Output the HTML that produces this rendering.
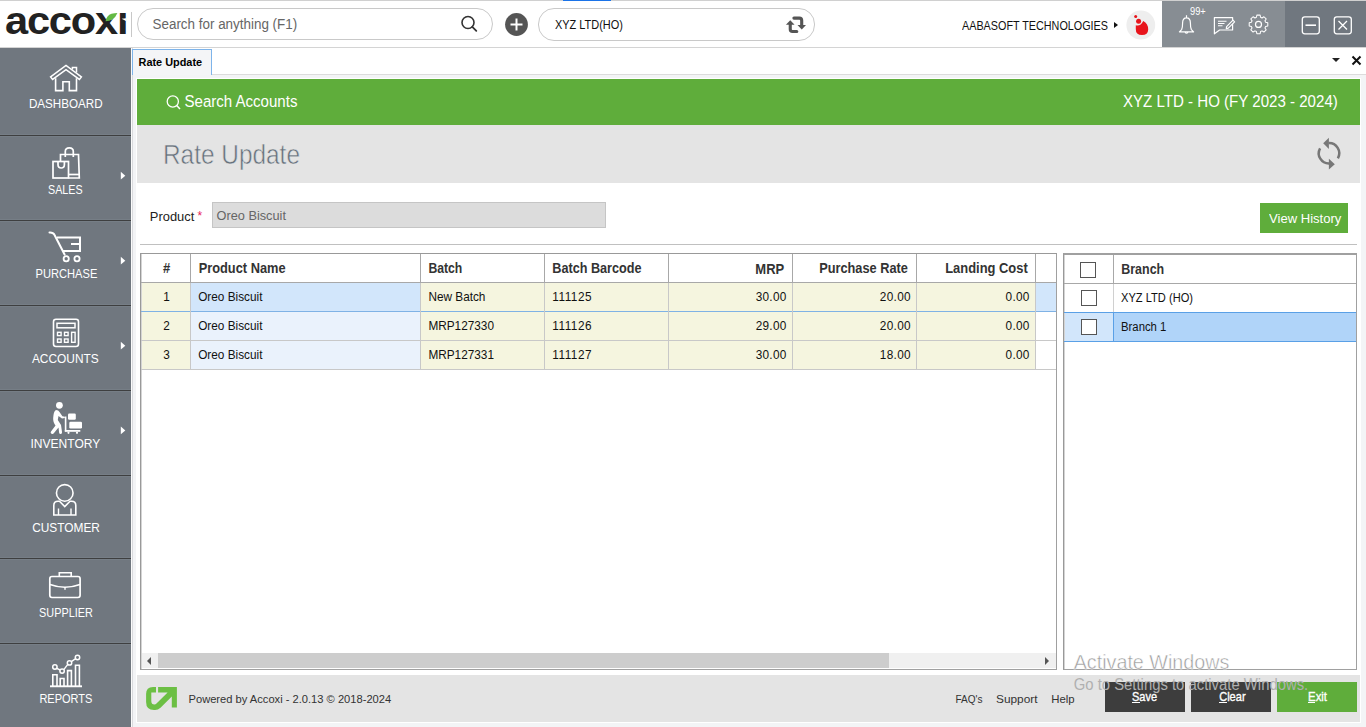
<!DOCTYPE html>
<html><head><meta charset="utf-8">
<style>
*{box-sizing:border-box;margin:0;padding:0}
html,body{width:1366px;height:727px;overflow:hidden;background:#fff;font-family:"Liberation Sans",sans-serif;position:relative}
.a{position:absolute}
.t{position:absolute;white-space:nowrap;line-height:1}
svg{position:absolute;overflow:visible}
.sep{position:absolute;left:0;width:131px;height:3px;background:#767e86;border-top:0;}.sep::after{content:'';position:absolute;left:0;top:1px;width:131px;height:1px;background:#3e3f40}
.arr{position:absolute;left:121px;width:0;height:0;border-left:4.5px solid #fff;border-top:3.5px solid transparent;border-bottom:3.5px solid transparent}
</style></head><body>

<div class="a" style="left:0;top:0;width:1366px;height:1px;background:#d0d0d0"></div>
<div class="a" style="left:0;top:47px;width:1366px;height:1px;background:#d4d4d4"></div>
<div class="a" style="left:563px;top:0;width:48px;height:1px;background:#1a73e8"></div>
<div class="t" style="left:5px;top:1px;font-size:42px;font-weight:bold;color:#222;letter-spacing:-1.2px;transform-origin:0 12px;transform:scale(0.99,0.91)">accox&#305;</div>
<svg style="left:0;top:0" width="130" height="46" viewBox="0 0 130 46"><path d="M104.5 11 H118.8 V14.5 L112 19.6 L106.5 19.8 Z" fill="#fff"/><path d="M105.6 21.2 Q106.6 15.5 111.5 13.8 Q114.5 12.9 117.4 12.9 Q115.8 17 112.5 19.2 Q109.5 21.2 105.6 21.2 Z" fill="#63b944"/><path d="M121.6 18.7 L126 18.2 L126 21 Z" fill="#fff"/></svg>
<div class="a" style="left:131px;top:12px;width:1px;height:25px;background:#c8c8c8"></div>
<div class="a" style="left:137px;top:8px;width:356px;height:32px;border:1px solid #c9c9c9;border-radius:16px"></div>
<svg style="left:460px;top:15px" width="18" height="18" viewBox="0 0 18 18"><circle cx="8" cy="7.5" r="6" fill="none" stroke="#333" stroke-width="1.6"/><line x1="12.3" y1="11.8" x2="16.3" y2="15.8" stroke="#333" stroke-width="1.8" stroke-linecap="round"/></svg>
<svg style="left:505px;top:13px" width="23" height="23" viewBox="0 0 23 23"><circle cx="11.5" cy="11.5" r="11.4" fill="#555"/><line x1="5.5" y1="11.5" x2="17.5" y2="11.5" stroke="#fff" stroke-width="2"/><line x1="11.5" y1="5.5" x2="11.5" y2="17.5" stroke="#fff" stroke-width="2"/></svg>
<div class="a" style="left:538px;top:8px;width:277px;height:33px;border:1px solid #c9c9c9;border-radius:16px"></div>
<svg style="left:782px;top:12px" width="28" height="24" viewBox="0 0 28 24"><g fill="none" stroke="#555" stroke-width="3.1" stroke-linecap="round"><path d="M8.25 12 V17.3 Q8.25 19.5 10.45 19.5 H14.8"/><path d="M11.9 6.1 H17.4 Q19.7 6.1 19.7 8.4 V13.5"/></g><g fill="#555"><path d="M8.25 8.2 L3.9 12.8 H12.6 Z"/><path d="M19.75 17.4 L15.5 13 H24 Z"/></g></svg>
<div class="a" style="left:1114px;top:22px;width:0;height:0;border-left:4px solid #111;border-top:3.5px solid transparent;border-bottom:3.5px solid transparent"></div>
<svg style="left:1126px;top:10px" width="30" height="30" viewBox="0 0 30 30"><circle cx="14.8" cy="15" r="14.4" fill="#eeeeee"/><path d="M9.8 15.2 Q14.5 16.5 17.2 10.9 Q22.3 13.5 22.2 19.5 Q22 25 16 25 Q9.6 25 9.8 19 Z" fill="#e8141b"/><circle cx="12.6" cy="11.2" r="2.5" fill="#e8141b"/><circle cx="9.7" cy="6.4" r="1.5" fill="#e8141b"/></svg>
<div class="a" style="left:1162px;top:1px;width:123px;height:46px;background:#878d93"></div>
<div class="a" style="left:1285px;top:1px;width:81px;height:46px;background:#70777f"></div>
<svg style="left:1162px;top:0" width="204" height="48" viewBox="0 0 204 48"><g fill="none" stroke="#fff" stroke-width="1.2" stroke-linejoin="round">
<path d="M24.5 15.2 V17.8 M19.6 29.6 C20.5 28 20.6 26 20.6 23 Q20.6 17.9 24.5 17.9 Q28.4 17.9 28.4 23 C28.4 26 28.5 28 29.4 29.6 L31.6 31.8 H17.4 Z"/>
<path d="M23 32.2 Q24.5 34.2 26 32.2"/>
<path d="M52.4 17.6 H70.6 V30 H57.6 L52.4 33.8 Z"/>
<path d="M56 21.2 H64.5 M56 23.5 H62.5 M56 25.8 H60.5" stroke-width="1.1"/>
<path d="M64.6 26.6 L71 20.2 L72.6 21.8 L66.3 28.2 L64.3 28.7 Z" fill="#878d93"/>
<circle cx="96.5" cy="24.4" r="3"/>
<path d="M94.6 15.2 H98.4 L98.9 17.7 L100.6 18.5 L102.8 17.1 L105.4 19.7 L104 21.9 L104.8 23.6 L107.3 24.1 V27.9 L104.8 28.4 L104 30.1 L105.4 32.3 L102.8 34.9 L100.6 33.5 L98.9 34.3 L98.4 36.8 H94.6 L94.1 34.3 L92.4 33.5 L90.2 34.9 L87.6 32.3 L89 30.1 L88.2 28.4 L85.7 27.9 V24.1 L88.2 23.6 L89 21.9 L87.6 19.7 L90.2 17.1 L92.4 18.5 L94.1 17.7 Z" transform="translate(96.5 24.4) scale(0.86) translate(-96.5 -26)"/>
<rect x="140.3" y="16.8" width="17" height="17" rx="2.5" stroke-width="1.3"/>
<path d="M143.5 25.2 H154" stroke-width="1.6"/>
<rect x="172.3" y="16.8" width="17" height="17" rx="2.5" stroke-width="1.3"/>
<path d="M176.5 21 L185 29.5 M185 21 L176.5 29.5" stroke-width="1.3"/>
</g></svg>

<div class="t" style="left:152.50px;top:17.63px;font-size:13.43px;color:#666;transform-origin:0 11.37px;transform:scaleY(1.079);">Search for anything (F1)</div>
<div class="t" style="left:555.00px;top:19.72px;font-size:10.96px;color:#111;transform-origin:0 9.28px;transform:scaleY(1.190);">XYZ LTD(HO)</div>
<div class="t" style="left:962.00px;top:20.86px;font-size:10.80px;color:#111;transform-origin:0 9.14px;transform:scaleY(1.208);">AABASOFT TECHNOLOGIES</div>
<div class="t" style="left:1190.00px;top:8.11px;font-size:9.32px;color:#fff;transform-origin:0 7.89px;transform:scaleY(1.088);">99+</div>
<div class="a" style="left:0;top:48px;width:131px;height:679px;background:#70777f"></div>
<div class="sep" style="top:134px"></div>
<div class="sep" style="top:219px"></div>
<div class="sep" style="top:304px"></div>
<div class="sep" style="top:389px"></div>
<div class="sep" style="top:474px"></div>
<div class="sep" style="top:557px"></div>
<div class="sep" style="top:642px"></div>
<div class="t" style="left:28.90px;top:98.14px;font-size:11.65px;color:#fff;transform-origin:0 9.86px;transform:scaleY(1.120);">DASHBOARD</div>
<div class="t" style="left:48.00px;top:184.92px;font-size:10.73px;color:#fff;transform-origin:0 9.08px;transform:scaleY(1.216);">SALES</div>
<div class="t" style="left:35.50px;top:268.57px;font-size:11.14px;color:#fff;transform-origin:0 9.43px;transform:scaleY(1.171);">PURCHASE</div>
<div class="t" style="left:31.90px;top:353.92px;font-size:11.91px;color:#fff;transform-origin:0 10.08px;transform:scaleY(1.095);">ACCOUNTS</div>
<div class="t" style="left:30.50px;top:437.80px;font-size:12.05px;color:#fff;transform-origin:0 10.20px;transform:scaleY(1.082);">INVENTORY</div>
<div class="t" style="left:32.20px;top:522.94px;font-size:11.88px;color:#fff;transform-origin:0 10.06px;transform:scaleY(1.098);">CUSTOMER</div>
<div class="t" style="left:39.10px;top:607.81px;font-size:10.86px;color:#fff;transform-origin:0 9.19px;transform:scaleY(1.201);">SUPPLIER</div>
<div class="t" style="left:39.40px;top:693.66px;font-size:11.03px;color:#fff;transform-origin:0 9.34px;transform:scaleY(1.183);">REPORTS</div>
<svg style="left:0;top:0" width="131" height="727" viewBox="0 0 131 727"><g fill="#fff"><path d="M120.8 171.8 L125.3 175.65 L120.8 179.5 Z"/><path d="M120.8 256.8 L125.3 260.65 L120.8 264.5 Z"/><path d="M120.8 341.8 L125.3 345.65 L120.8 349.5 Z"/><path d="M120.8 426.6 L125.3 430.45 L120.8 434.3 Z"/></g></svg>
<svg style="left:0;top:0" width="131" height="727" viewBox="0 0 131 727">
<g fill="none" stroke="#fff" stroke-width="1.7" stroke-linejoin="miter">
<!-- house -->
<path d="M50.6 76.9 L66 65.4 L81.4 76.9 L79.4 79.4 L66 69.6 L52.6 79.4 Z" stroke-width="1.5"/>
<path d="M55.6 78.2 V90.6 H62.9 V81.7 H69.3 V90.6 H76.5 V78.2" stroke-width="1.6"/>
<path d="M72.4 69.4 V67.6 H76.5 V72.6" stroke-width="1.5"/>
<!-- sales bags -->
<rect x="53" y="161.5" width="15.5" height="16.5"/>
<path d="M58 161.5 V164.5 Q58 168 61.2 168 Q64.4 168 64.4 164.5 V161.5"/>
<path d="M60.5 161 V154.5 H78.5 L79.3 178 H68.5"/>
<path d="M68.5 174.5 H79"/>
<path d="M65.3 157 V151.5 Q65.3 147.8 69.3 147.8 Q73.3 147.8 73.3 151.5 V157"/>
<!-- cart -->
<path d="M49.5 232.4 Q53.2 232.2 54.3 234.5 L64.6 254.5" stroke-width="2" stroke-linecap="round"/>
<path d="M57 237.5 H80 V251 H62" stroke-width="2"/>
<path d="M71 244 H80" stroke-width="2"/>
<circle cx="66.2" cy="258.8" r="2.6" stroke-width="1.8"/>
<circle cx="77" cy="258.8" r="2.6" stroke-width="1.8"/>
<!-- calculator -->
<rect x="53.5" y="319.3" width="25" height="27.2" rx="2.5" stroke-width="1.6"/>
<rect x="57" y="323.3" width="18" height="4.5" stroke-width="1.5"/>
<rect x="57.5" y="332.3" width="3.6" height="3.3" stroke-width="1.4"/>
<rect x="64.5" y="332.3" width="3.6" height="3.3" stroke-width="1.4"/>
<rect x="57.5" y="339" width="3.6" height="3.3" stroke-width="1.4"/>
<rect x="64.5" y="339" width="3.6" height="3.3" stroke-width="1.4"/>
<rect x="71.6" y="332.3" width="3.5" height="10" stroke-width="1.4"/>
<!-- customer -->
<circle cx="64.75" cy="492.9" r="8.3" stroke-width="1.6"/>
<path d="M53.8 515 V505.5 Q53.8 501.3 58 501.3 H59.5 L64.75 506.5 L70 501.3 H71.5 Q75.8 501.3 75.8 505.5 V515 Z" stroke-width="1.6"/>
<path d="M58.5 508.5 V515 M71 508.5 V515" stroke-width="1.4"/>
<!-- supplier -->
<rect x="49.8" y="576.5" width="30.3" height="21" rx="2.2" stroke-width="1.7"/>
<path d="M59.3 576 V572.8 H71.2 V576" stroke-width="1.6"/>
<path d="M50 584.5 Q65 590 80 584.5" stroke-width="1.6"/>
<!-- reports -->
<path d="M52.8 686 V674.8 H57 V686 M60.2 686 V678.5 H64 V686 M67.6 686 V670.6 H71.4 V686 M75.5 686 V665.2 H79.4 V686" stroke-width="1.6"/>
<path d="M50 686.3 H82" stroke-width="1.9"/>
<path d="M56.8 668.3 L60.2 670 M63.8 669.6 L67.8 664.3 M71.3 661.7 L75.7 658.7" stroke-width="1.4"/>
<circle cx="54.9" cy="667" r="2.2" stroke-width="1.5"/>
<circle cx="62.1" cy="671.1" r="2.2" stroke-width="1.5"/>
<circle cx="69.5" cy="662.9" r="2.2" stroke-width="1.5"/>
<circle cx="77.5" cy="657.5" r="2.2" stroke-width="1.5"/>
</g>
<g fill="#fff">
<rect x="64.3" y="587" width="1.4" height="2.8"/>
<!-- inventory -->
<circle cx="59.4" cy="405.3" r="3.4"/>
<path d="M56 410 Q54 411 53.5 415 Q52.5 421 54.5 424 L55.5 425.5 L51 431.5 Q50 433 51.5 433.7 Q53 434.3 54 433 L58.5 427.5 L59.2 433 Q59.5 434.3 61 434 Q62.3 433.7 62 432 L61 425 L57.8 420 L58.5 416 L62 418.5 L64.8 418 L64.8 416.8 L62.4 416.2 L59.5 412 Q58.5 410 56 410 Z"/>
<rect x="68" y="413.6" width="7.8" height="6.2" rx="1.2"/>
<rect x="69.3" y="421.8" width="12.7" height="6.6" rx="1.2"/>
<rect x="64.8" y="416.5" width="1.6" height="15"/>
<rect x="64.8" y="430" width="15.5" height="1.8"/>
<circle cx="68.5" cy="432.8" r="1.1"/><circle cx="77" cy="432.8" r="1.1"/>
</g>
</svg>
<div class="a" style="left:131px;top:48px;width:1235px;height:679px;background:#f3f4f6"></div>
<div class="a" style="left:131px;top:48px;width:1px;height:679px;background:#fbfbfb"></div>
<div class="a" style="left:132px;top:48px;width:1px;height:679px;background:#d9dadd"></div>
<div class="a" style="left:133px;top:48px;width:1233px;height:27px;background:#fff;border-bottom:1px solid #dcdcdc"></div>
<div class="a" style="left:132px;top:49px;width:80px;height:26px;background:#f4f5f7;border:1px solid #7eb4ea;border-bottom:none"></div>
<div class="a" style="left:1331.5px;top:58px;width:0;height:0;border-top:4.5px solid #222;border-left:4px solid transparent;border-right:4px solid transparent"></div>
<svg style="left:1351px;top:55px" width="11" height="11" viewBox="0 0 11 11"><path d="M1.5 1.5 L9.5 9.5 M9.5 1.5 L1.5 9.5" stroke="#111" stroke-width="2"/></svg>
<div class="a" style="left:136px;top:78px;width:1225px;height:645px;background:#fff"></div>
<div class="a" style="left:137px;top:79px;width:1223px;height:46px;background:#5fad3b"></div>
<svg style="left:166px;top:94.5px" width="16" height="16" viewBox="0 0 16 16"><circle cx="6.8" cy="6.5" r="5.6" fill="none" stroke="#fff" stroke-width="1.3"/><line x1="10.7" y1="10.5" x2="14" y2="14" stroke="#fff" stroke-width="1.5"/></svg>
<div class="a" style="left:137px;top:125px;width:1223px;height:58px;background:#e4e4e4"></div>
<svg style="left:1316px;top:136px" width="26" height="36" viewBox="0 0 26 36"><g fill="none" stroke="#777" stroke-width="2.5"><path d="M12.5 7.1 A10.2 10.2 0 0 1 21.9 22.3"/><path d="M13.5 27.5 A10.2 10.2 0 0 1 4.1 12.3"/></g><g fill="#777"><path d="M7.2 7.2 L12.9 1.8 L12.9 12.9 Z"/><path d="M18.8 28.2 L12.9 22.8 L12.9 33.6 Z"/></g></svg>
<div class="a" style="left:137px;top:183px;width:1223px;height:492px;background:#fff"></div>
<div class="a" style="left:212px;top:202px;width:394px;height:26px;background:#dcdcdc;border:1px solid #c5c5c5"></div>
<div class="a" style="left:1260px;top:203px;width:88px;height:30px;background:#5fad3b"></div>
<div class="a" style="left:140px;top:244px;width:1217px;height:1px;background:#c0c0c0"></div>

<div class="t" style="left:138.50px;top:56.76px;font-size:10.92px;font-weight:bold;color:#000;transform-origin:0 9.24px;transform:scaleY(1.062);">Rate Update</div>
<div class="t" style="left:184.50px;top:94.25px;font-size:15.06px;color:#fff;transform-origin:0 12.75px;transform:scaleY(1.059);">Search Accounts</div>
<div class="t" style="left:1123.00px;top:94.24px;font-size:15.08px;color:#fff;transform-origin:0 12.76px;transform:scaleY(1.057);">XYZ LTD - HO (FY 2023 - 2024)</div>
<div class="t" style="left:163.00px;top:144.35px;font-size:24.40px;color:#66717c;transform-origin:0 20.65px;transform:scaleY(1.129);-webkit-text-stroke:0.5px #e4e4e4">Rate Update</div>
<div class="t" style="left:149.80px;top:211.07px;font-size:12.92px;color:#222;transform-origin:0 10.93px;transform:scaleY(1.010);">Product</div>
<div class="t" style="left:197.5px;top:210px;font-size:12px;color:#e8245a">*</div>
<div class="t" style="left:216.50px;top:210.20px;font-size:12.76px;color:#666;transform-origin:0 10.80px;transform:scaleY(1.022);">Oreo Biscuit</div>
<div class="t" style="left:1269.00px;top:211.94px;font-size:13.07px;color:#fff;transform-origin:0 11.06px;transform:scaleY(0.998);">View History</div>
<div class="a" style="left:140px;top:253px;width:917px;height:417px;border:1px solid #a0a0a0;border-left:1px solid #999;border-top:1px solid #999;box-shadow:inset 1px 0 0 #d4d4d4;background:#fff"></div>
<div class="a" style="left:142px;top:283px;width:48px;height:28px;background:#f5f5df"></div>
<div class="a" style="left:191px;top:283px;width:229px;height:28px;background:#d2e6fb"></div>
<div class="a" style="left:421px;top:283px;width:614px;height:28px;background:#f5f5df"></div>
<div class="a" style="left:1036px;top:283px;width:20px;height:28px;background:#d2e6fb"></div>
<div class="a" style="left:142px;top:312px;width:48px;height:28px;background:#f5f5df"></div>
<div class="a" style="left:191px;top:312px;width:229px;height:28px;background:#eaf2fc"></div>
<div class="a" style="left:421px;top:312px;width:614px;height:28px;background:#f5f5df"></div>
<div class="a" style="left:142px;top:341px;width:48px;height:28px;background:#f5f5df"></div>
<div class="a" style="left:191px;top:341px;width:229px;height:28px;background:#eaf2fc"></div>
<div class="a" style="left:421px;top:341px;width:614px;height:28px;background:#f5f5df"></div>
<div class="a" style="left:141px;top:282px;width:915px;height:1px;background:#a8a8a8"></div>
<div class="a" style="left:141px;top:311px;width:915px;height:1px;background:#7fb2e5"></div>
<div class="a" style="left:141px;top:340px;width:915px;height:1px;background:#c8c8c8"></div>
<div class="a" style="left:141px;top:369px;width:915px;height:1px;background:#c8c8c8"></div>
<div class="a" style="left:190px;top:254px;width:1px;height:28px;background:#a8a8a8"></div>
<div class="a" style="left:190px;top:283px;width:1px;height:86px;background:#c8c8c8"></div>
<div class="a" style="left:420px;top:254px;width:1px;height:28px;background:#a8a8a8"></div>
<div class="a" style="left:420px;top:283px;width:1px;height:86px;background:#c8c8c8"></div>
<div class="a" style="left:544px;top:254px;width:1px;height:28px;background:#a8a8a8"></div>
<div class="a" style="left:544px;top:283px;width:1px;height:86px;background:#c8c8c8"></div>
<div class="a" style="left:668px;top:254px;width:1px;height:28px;background:#a8a8a8"></div>
<div class="a" style="left:668px;top:283px;width:1px;height:86px;background:#c8c8c8"></div>
<div class="a" style="left:792px;top:254px;width:1px;height:28px;background:#a8a8a8"></div>
<div class="a" style="left:792px;top:283px;width:1px;height:86px;background:#c8c8c8"></div>
<div class="a" style="left:916px;top:254px;width:1px;height:28px;background:#a8a8a8"></div>
<div class="a" style="left:916px;top:283px;width:1px;height:86px;background:#c8c8c8"></div>
<div class="a" style="left:1035px;top:254px;width:1px;height:28px;background:#a8a8a8"></div>
<div class="a" style="left:1035px;top:283px;width:1px;height:86px;background:#c8c8c8"></div>
<div class="t" style="left:162.89px;top:262.00px;font-size:13.00px;font-weight:bold;color:#333;transform-origin:0 11.00px;transform:scaleY(1.115);">#</div>
<div class="t" style="left:198.70px;top:263.15px;font-size:12.82px;font-weight:bold;color:#333;transform-origin:0 10.85px;transform:scaleY(1.131);">Product Name</div>
<div class="t" style="left:428.40px;top:262.65px;font-size:12.23px;font-weight:bold;color:#333;transform-origin:0 10.35px;transform:scaleY(1.185);">Batch</div>
<div class="t" style="left:552.30px;top:263.29px;font-size:12.65px;font-weight:bold;color:#333;transform-origin:0 10.71px;transform:scaleY(1.146);">Batch Barcode</div>
<div class="t" style="left:755.34px;top:263.00px;font-size:13.00px;font-weight:bold;color:#333;transform-origin:0 11.00px;transform:scaleY(1.115);">MRP</div>
<div class="t" style="left:819.20px;top:263.18px;font-size:12.78px;font-weight:bold;color:#333;transform-origin:0 10.82px;transform:scaleY(1.134);">Purchase Rate</div>
<div class="t" style="left:945.20px;top:263.06px;font-size:12.93px;font-weight:bold;color:#333;transform-origin:0 10.94px;transform:scaleY(1.121);">Landing Cost</div>
<div class="t" style="left:163.23px;top:292.01px;font-size:11.80px;color:#111;transform-origin:0 9.99px;transform:scaleY(1.105);">1</div>
<div class="t" style="left:198.20px;top:292.01px;font-size:11.80px;color:#111;transform-origin:0 9.99px;transform:scaleY(1.105);">Oreo Biscuit</div>
<div class="t" style="left:428.40px;top:292.01px;font-size:11.80px;color:#111;transform-origin:0 9.99px;transform:scaleY(1.105);">New Batch</div>
<div class="t" style="left:552.30px;top:292.01px;font-size:11.80px;color:#111;transform-origin:0 9.99px;transform:scaleY(1.105);letter-spacing:0.5px">111125</div>
<div class="t" style="left:755.64px;top:292.01px;font-size:11.80px;color:#111;transform-origin:0 9.99px;transform:scaleY(1.105);letter-spacing:0.3px">30.00</div>
<div class="t" style="left:879.84px;top:292.01px;font-size:11.80px;color:#111;transform-origin:0 9.99px;transform:scaleY(1.105);letter-spacing:0.3px">20.00</div>
<div class="t" style="left:1005.55px;top:292.01px;font-size:11.80px;color:#111;transform-origin:0 9.99px;transform:scaleY(1.105);letter-spacing:0.3px">0.00</div>
<div class="t" style="left:163.23px;top:321.01px;font-size:11.80px;color:#111;transform-origin:0 9.99px;transform:scaleY(1.105);">2</div>
<div class="t" style="left:198.20px;top:321.01px;font-size:11.80px;color:#111;transform-origin:0 9.99px;transform:scaleY(1.105);">Oreo Biscuit</div>
<div class="t" style="left:428.40px;top:321.01px;font-size:11.80px;color:#111;transform-origin:0 9.99px;transform:scaleY(1.105);">MRP127330</div>
<div class="t" style="left:552.30px;top:321.01px;font-size:11.80px;color:#111;transform-origin:0 9.99px;transform:scaleY(1.105);letter-spacing:0.5px">111126</div>
<div class="t" style="left:755.64px;top:321.01px;font-size:11.80px;color:#111;transform-origin:0 9.99px;transform:scaleY(1.105);letter-spacing:0.3px">29.00</div>
<div class="t" style="left:879.84px;top:321.01px;font-size:11.80px;color:#111;transform-origin:0 9.99px;transform:scaleY(1.105);letter-spacing:0.3px">20.00</div>
<div class="t" style="left:1005.55px;top:321.01px;font-size:11.80px;color:#111;transform-origin:0 9.99px;transform:scaleY(1.105);letter-spacing:0.3px">0.00</div>
<div class="t" style="left:163.23px;top:350.01px;font-size:11.80px;color:#111;transform-origin:0 9.99px;transform:scaleY(1.105);">3</div>
<div class="t" style="left:198.20px;top:350.01px;font-size:11.80px;color:#111;transform-origin:0 9.99px;transform:scaleY(1.105);">Oreo Biscuit</div>
<div class="t" style="left:428.40px;top:350.01px;font-size:11.80px;color:#111;transform-origin:0 9.99px;transform:scaleY(1.105);">MRP127331</div>
<div class="t" style="left:552.30px;top:350.01px;font-size:11.80px;color:#111;transform-origin:0 9.99px;transform:scaleY(1.105);letter-spacing:0.5px">111127</div>
<div class="t" style="left:755.64px;top:350.01px;font-size:11.80px;color:#111;transform-origin:0 9.99px;transform:scaleY(1.105);letter-spacing:0.3px">30.00</div>
<div class="t" style="left:879.84px;top:350.01px;font-size:11.80px;color:#111;transform-origin:0 9.99px;transform:scaleY(1.105);letter-spacing:0.3px">18.00</div>
<div class="t" style="left:1005.55px;top:350.01px;font-size:11.80px;color:#111;transform-origin:0 9.99px;transform:scaleY(1.105);letter-spacing:0.3px">0.00</div>
<div class="a" style="left:142px;top:653px;width:914px;height:15px;background:#f0f0f0"></div>
<div class="a" style="left:158px;top:653px;width:731px;height:15px;background:#cdcdcd"></div>
<div class="a" style="left:147px;top:657px;width:0;height:0;border-right:4px solid #555;border-top:4px solid transparent;border-bottom:4px solid transparent"></div>
<div class="a" style="left:1045px;top:657px;width:0;height:0;border-left:4px solid #555;border-top:4px solid transparent;border-bottom:4px solid transparent"></div>
<div class="a" style="left:1063px;top:253px;width:294px;height:417px;border:1px solid #a0a0a0;border-left:1px solid #999;border-top:2px solid #a0a0a0;box-shadow:inset 1px 0 0 #d4d4d4;background:#fff"></div>
<div class="a" style="left:1065px;top:313px;width:48px;height:28px;background:#d2e6fb"></div>
<div class="a" style="left:1114px;top:313px;width:242px;height:28px;background:#b0d4f9"></div>
<div class="a" style="left:1064px;top:283px;width:292px;height:1px;background:#a8a8a8"></div>
<div class="a" style="left:1064px;top:312px;width:292px;height:1px;background:#5aa0e6"></div>
<div class="a" style="left:1064px;top:341px;width:292px;height:1px;background:#5aa0e6"></div>
<div class="a" style="left:1113px;top:255px;width:1px;height:28px;background:#a8a8a8"></div>
<div class="a" style="left:1113px;top:284px;width:1px;height:28px;background:#d0d0d0"></div>
<div class="a" style="left:1113px;top:313px;width:1px;height:28px;background:#5aa0e6"></div>

<div class="a" style="left:1080px;top:262px;width:16px;height:16px;border:1px solid #555;background:#fff"></div>
<div class="a" style="left:1081px;top:290px;width:16px;height:16px;border:1px solid #555;background:#fff"></div>
<div class="a" style="left:1081px;top:319px;width:16px;height:16px;border:1px solid #555;background:#fff"></div>
<div class="t" style="left:1121.30px;top:264.46px;font-size:12.45px;font-weight:bold;color:#333;transform-origin:0 10.54px;transform:scaleY(1.164);">Branch</div>
<div class="t" style="left:1121.00px;top:292.59px;font-size:11.11px;color:#111;transform-origin:0 9.41px;transform:scaleY(1.174);">XYZ LTD (HO)</div>
<div class="t" style="left:1121.00px;top:322.40px;font-size:11.34px;color:#111;transform-origin:0 9.60px;transform:scaleY(1.151);">Branch 1</div>
<div class="a" style="left:137px;top:675px;width:1223px;height:47px;background:#e4e4e4"></div>
<svg style="left:142px;top:683px" width="40" height="30" viewBox="0 0 40 30"><path d="M14 3.9 H11 Q4.1 3.9 4.1 11 V19 Q4.1 27 12 27 H13 Q16 27 18.5 24.8 L29.8 13.6 V24.4 H34.9 V3.9 H16.1 V9.5 H25.6 L14.5 20.6 Q13.5 21.5 12.5 21.5 Q9.3 21.5 9.3 18 V9.5 H14 Z" fill="#6cbf44"/></svg>
<div class="t" style="left:188.50px;top:693.56px;font-size:11.15px;color:#333;transform-origin:0 9.44px;transform:scaleY(1.040);">Powered by Accoxi - 2.0.13 &#169; 2018-2024</div>
<div class="t" style="left:955.50px;top:694.50px;font-size:10.04px;color:#333;transform-origin:0 8.50px;transform:scaleY(1.155);">FAQ's</div>
<div class="t" style="left:996.00px;top:693.95px;font-size:11.87px;color:#333;transform-origin:0 10.05px;transform:scaleY(0.977);">Support</div>
<div class="t" style="left:1051.30px;top:694.36px;font-size:11.39px;color:#333;transform-origin:0 9.64px;transform:scaleY(1.018);">Help</div>
<div class="a" style="left:1105px;top:682px;width:80px;height:30px;background:#3d3d3d"></div>
<div class="a" style="left:1191px;top:682px;width:80px;height:30px;background:#3d3d3d"></div>
<div class="a" style="left:1277px;top:682px;width:80px;height:30px;background:#5fad3b"></div>
<div class="t" style="left:1132.00px;top:691.68px;font-size:11.01px;color:#fff;transform-origin:0 9.32px;transform:scaleY(1.185);-webkit-text-stroke:0.3px #fff">Save</div>
<div class="t" style="left:1219.20px;top:691.65px;font-size:11.05px;color:#fff;transform-origin:0 9.35px;transform:scaleY(1.181);-webkit-text-stroke:0.3px #fff">Clear</div>
<div class="t" style="left:1308.10px;top:692.39px;font-size:11.35px;color:#fff;transform-origin:0 9.61px;transform:scaleY(1.149);-webkit-text-stroke:0.3px #fff">Exit</div>
<div class="a" style="left:1132px;top:702px;width:8.0px;height:1px;background:#fff"></div>
<div class="a" style="left:1218.8px;top:702px;width:8.2px;height:1px;background:#fff"></div>
<div class="a" style="left:1307.9px;top:702px;width:6.9px;height:1px;background:#fff"></div>
<div class="t" style="left:1073.70px;top:653.30px;font-size:19.73px;color:#9c9c9c;transform-origin:0 16.70px;transform:scaleY(1.028);-webkit-text-stroke:0.5px #fff">Activate Windows</div>
<div class="t" style="left:1073.70px;top:678.41px;font-size:14.87px;color:#b0b0b0;transform-origin:0 12.59px;transform:scaleY(1.072);">Go to Settings to activate Windows.</div>
</body></html>
